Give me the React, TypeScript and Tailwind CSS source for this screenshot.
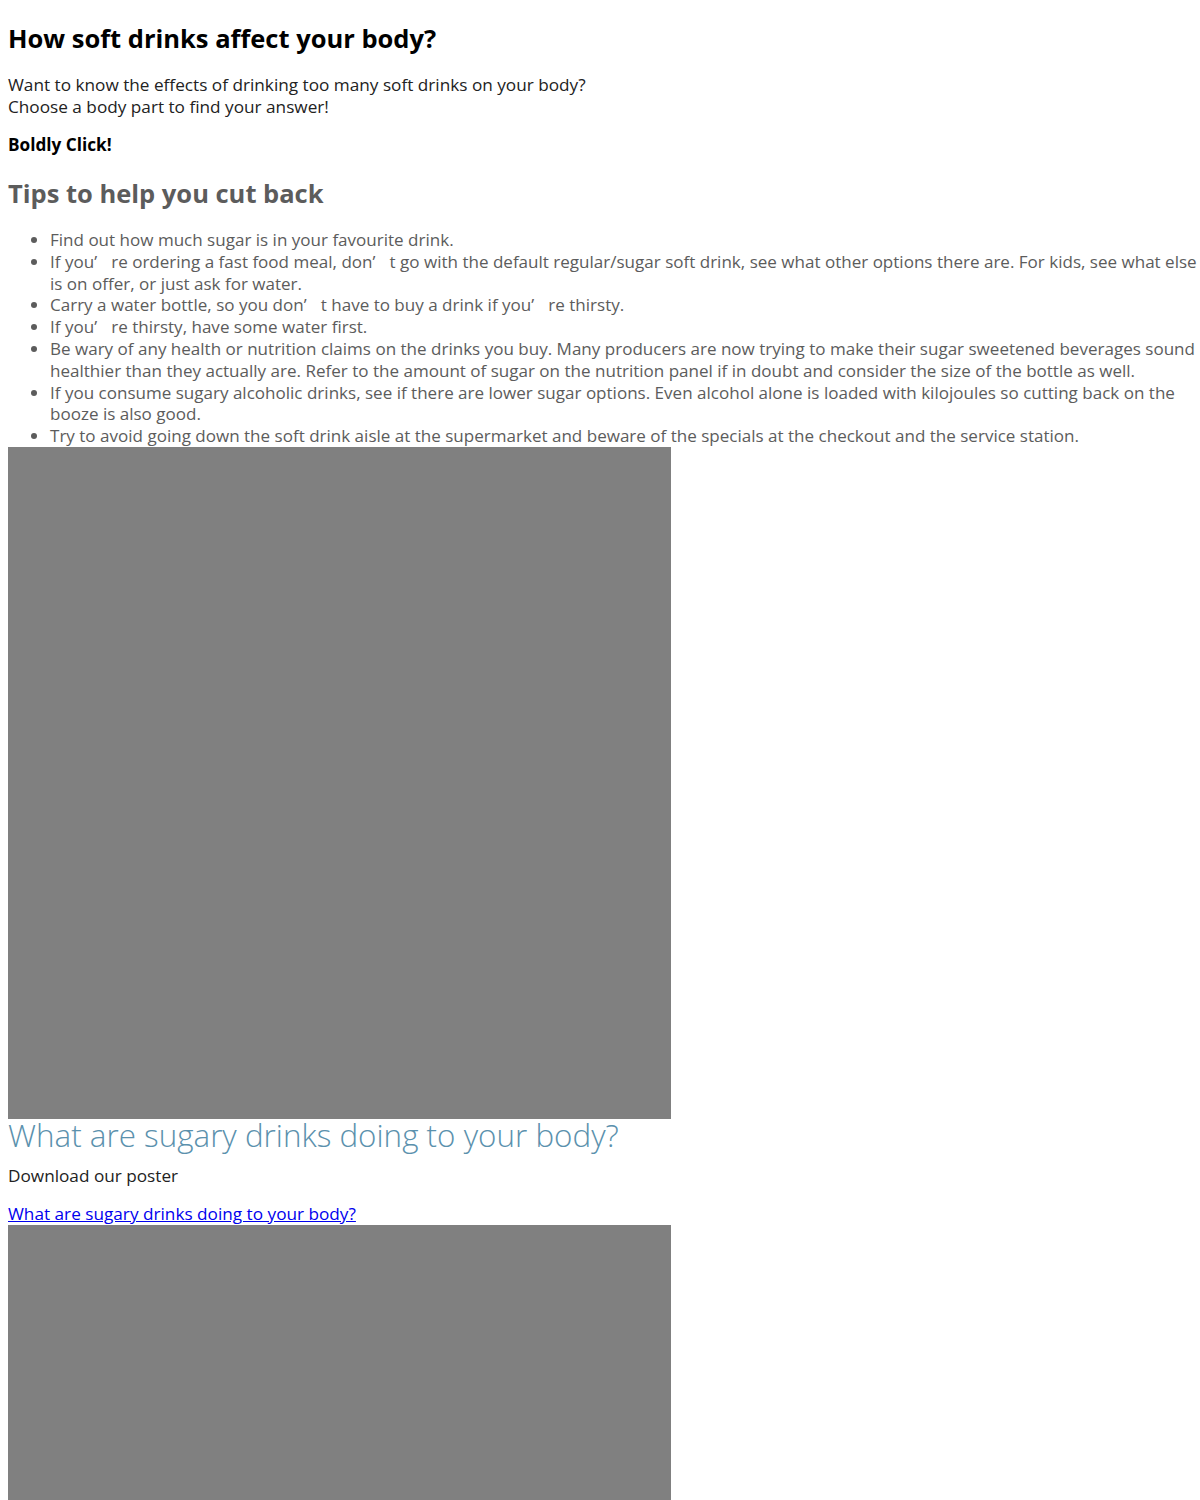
// wide apostrophe, as the original page renders it
const Q = () => <span className="inline-block w-[1em]">’</span>;

const tips: React.ReactNode[][] = [
  ['Find out how much sugar is in your favourite drink.'],
  [
    <>
      If you<Q />re ordering a fast food meal, don<Q />t go with the default regular/sugar soft drink, see what other options there are. For kids, see what else
    </>,
    'is on offer, or just ask for water.',
  ],
  [
    <>
      Carry a water bottle, so you don<Q />t have to buy a drink if you<Q />re thirsty.
    </>,
  ],
  [
    <>
      If you<Q />re thirsty, have some water first.
    </>,
  ],
  [
    'Be wary of any health or nutrition claims on the drinks you buy. Many producers are now trying to make their sugar sweetened beverages sound',
    'healthier than they actually are. Refer to the amount of sugar on the nutrition panel if in doubt and consider the size of the bottle as well.',
  ],
  [
    'If you consume sugary alcoholic drinks, see if there are lower sugar options. Even alcohol alone is loaded with kilojoules so cutting back on the',
    'booze is also good.',
  ],
  ['Try to avoid going down the soft drink aisle at the supermarket and beware of the specials at the checkout and the service station.'],
];

export default function App() {
  return (
    <div
      className="bg-white px-2 pt-[22px] text-[17.2px] text-[#222]"
      style={{ fontFamily: '"Open Sans", "Noto Sans", sans-serif' }}
    >
      <h1 className="text-[25.5px] font-bold leading-[32px] text-black">
        How soft drinks affect your body?
      </h1>
      <p className="mt-[20px] leading-[22px]">
        Want to know the effects of drinking too many soft drinks on your body?
        <br />
        Choose a body part to find your answer!
      </p>
      <p className="mt-[16px] font-bold leading-[22px] text-black">Boldly Click!</p>
      <h2 className="mt-[21px] text-[25.5px] font-bold leading-[32px] text-[#5c5c5c]">
        Tips to help you cut back
      </h2>
      <ul className="mt-[20px] list-disc pl-[42px] text-[17.05px] leading-[21.8px] text-[#5c5c5c]">
        {tips.map((lines, n) => (
          <li key={n} className="whitespace-nowrap">
            {lines.map((line, i) => (
              <span key={i}>
                {i > 0 && <br />}
                {line}
              </span>
            ))}
          </li>
        ))}
      </ul>
      <div className="h-[672px] w-[663px] bg-[#808080]" />
      <h2 className="text-[31.4px] font-light leading-[32px] text-[#5b91ad]">
        What are sugary drinks doing to your body?
      </h2>
      <p className="mt-[14px] leading-[22px]">Download our poster</p>
      <p className="mt-[16px] leading-[22px]">
        <a href="#poster" className="text-[#0000ee] underline">
          What are sugary drinks doing to your body?
        </a>
      </p>
      <div className="h-[672px] w-[663px] bg-[#808080]" />
    </div>
  );
}
